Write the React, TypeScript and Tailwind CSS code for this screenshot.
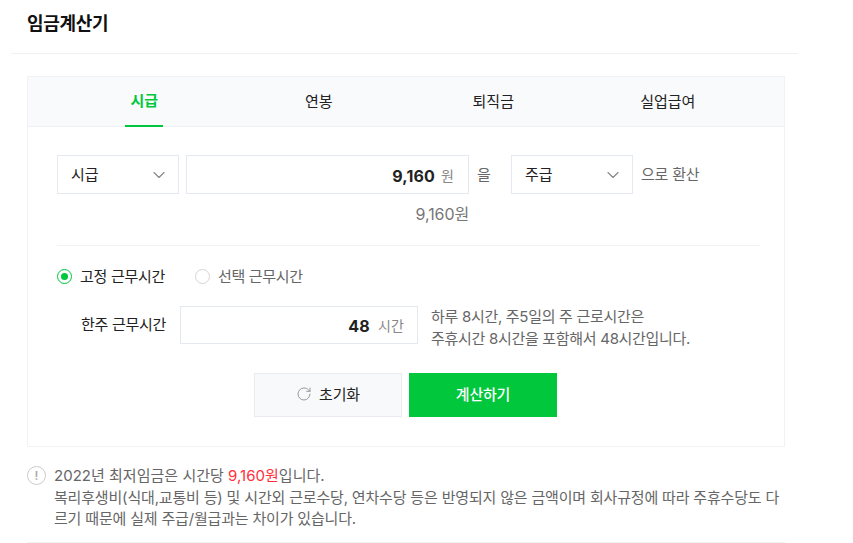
import { ChevronDown, RotateCw } from "lucide-react";

const font = `"Inter", "Noto Sans CJK KR", sans-serif`;

const tabs = ["시급", "연봉", "퇴직금", "실업급여"];

function SelectBox({ label }: { label: string }) {
  return (
    <div className="flex h-[39px] w-[122px] shrink-0 items-center justify-between border border-[#e4e8f0] bg-white pl-[13px] pr-[9px]">
      <span className="pt-[2px] text-[15px] tracking-[-0.1px] text-[#222]">{label}</span>
      <ChevronDown size={20} strokeWidth={1.4} className="text-[#888]" />
    </div>
  );
}

export default function App() {
  return (
    <div className="h-[543px] w-[853px] overflow-hidden bg-white" style={{ fontFamily: font }}>
      {/* Page title */}
      <header className="ml-[11px] flex h-[54px] w-[787px] items-start border-b border-[#eff1f5] pl-4 pt-[10px]">
        <h1 className="text-[18px] font-bold leading-[28px] tracking-[-0.3px] text-[#111]">임금계산기</h1>
      </header>

      <div className="ml-[27px] mt-[22px] w-[758px]">
        {/* Calculator card */}
        <section className="h-[371px] border border-[#f1f2f5] bg-white">
          <nav className="grid h-[50px] grid-cols-4 border-b border-[#eef0f3] bg-[#f9fafc] px-[29px]">
            {tabs.map((tab, i) => (
              <div key={tab} className="flex items-center justify-center">
                <span
                  className={
                    i === 0
                      ? "flex h-[50px] w-[38px] items-center justify-center border-b-2 border-[#00c73c] pt-[1px] text-[15px] font-bold text-[#00c73c]"
                      : "pt-[1px] text-[15px] text-[#222]"
                  }
                >
                  {tab}
                </span>
              </div>
            ))}
          </nav>

          <div className="px-[29px] pt-[28px]">
            {/* Conversion row */}
            <div className="flex items-start">
              <SelectBox label="시급" />
              <div className="ml-[7px] flex h-[39px] w-[283px] items-center justify-end border border-[#e4e8f0] pr-[14px] pt-[2px]">
                <span className="text-[16px] font-bold tracking-[0.2px] text-[#222]">9,160</span>
                <span className="ml-[6px] text-[14px] text-[#888]">원</span>
              </div>
              <span className="ml-2 mr-[19px] w-[15px] text-[15px] leading-[40px] text-[#666]">을</span>
              <SelectBox label="주급" />
              <span className="ml-2 text-[15px] leading-[39px] tracking-[-0.2px] text-[#666]">으로 환산</span>
            </div>
            <p className="mt-[8px] w-[412px] text-right text-[16px] leading-[22px] tracking-[-0.1px] text-[#777]">
              9,160원
            </p>

            {/* Working hours */}
            <div className="mt-[20px] w-[703px] border-t border-[#f1f2f5] pt-[19px]">
              <div className="flex h-[22px] items-center">
                <span className="flex size-[15px] items-center justify-center rounded-full border border-[#00c73c]">
                  <span className="size-[7px] rounded-full bg-[#00c73c]" />
                </span>
                <span className="ml-[8px] pt-[3px] text-[15px] tracking-[-0.3px] text-[#222]">고정 근무시간</span>
                <span className="ml-[30px] size-[15px] rounded-full border border-[#d5d5d5]" />
                <span className="ml-[8px] pt-[3px] text-[15px] tracking-[-0.3px] text-[#666]">선택 근무시간</span>
              </div>

              <div className="mt-[19px] flex items-start">
                <span className="ml-[24px] w-[99px] text-[15px] leading-[38px] tracking-[-0.3px] text-[#222]">
                  한주 근무시간
                </span>
                <div className="flex h-[38px] w-[238px] items-center justify-end border border-[#e4e8f0] pr-[13px] pt-[1px]">
                  <span className="text-[16px] font-bold tracking-[0.3px] text-[#222]">48</span>
                  <span className="ml-2 text-[14px] tracking-[0.1px] text-[#888]">시간</span>
                </div>
                <p className="ml-[13px] text-[15px] leading-[22px] tracking-[-0.3px] text-[#666]">
                  하루 8시간, 주5일의 주 근로시간은
                  <br />
                  주휴시간 8시간을 포함해서 48시간입니다.
                </p>
              </div>

              <div className="mt-[23px] ml-[197px] flex gap-[7px]">
                <button className="flex h-[44px] w-[148px] items-center justify-center gap-[7px] border border-[#e9ebf0] bg-[#f8f9fb] pt-[1px] text-[15px] tracking-[-0.2px] text-[#222]">
                  <RotateCw size={16} strokeWidth={1.5} className="-mt-[3px] text-[#999]" />
                  초기화
                </button>
                <button className="h-[44px] w-[148px] bg-[#00c73c] text-[15px] font-medium tracking-[-0.2px] text-white">
                  계산하기
                </button>
              </div>
            </div>
          </div>
        </section>

        {/* Notice */}
        <div className="mt-[18px] flex h-[78px] border-b border-[#eff1f5]">
          <span className="mt-[1px] flex size-[19px] shrink-0 items-center justify-center rounded-full border-[1.5px] border-[#ccc] text-[12px] font-semibold leading-none text-[#aaa]">
            !
          </span>
          <p className="ml-[8px] text-[15px] leading-[21.5px] tracking-[-0.18px] text-[#666]">
            <span className="tracking-[0.02px]">
              2022년 최저임금은 시간당 <span className="text-[#ff2f3b]">9,160원</span>입니다.
            </span>
            <br />
            복리후생비(식대,교통비 등) 및 시간외 근로수당, 연차수당 등은 반영되지 않은 금액이며 회사규정에 따라 주휴수당도 다
            <br />
            르기 때문에 실제 주급/월급과는 차이가 있습니다.
          </p>
        </div>
      </div>
    </div>
  );
}
